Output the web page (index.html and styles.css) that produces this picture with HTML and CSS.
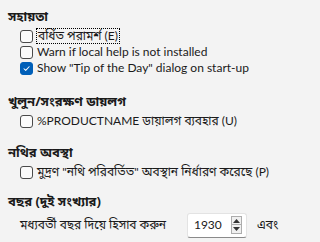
FILE: index.html
```html
<!DOCTYPE html>
<html>
<head>
<meta charset="utf-8">
<link rel="stylesheet" href="styles.css">
</head>
<body>
<div class="page">
  <section class="group g1">
    <div class="heading">সহায়তা</div>
    <div class="items">
      <label class="check"><span class="box"></span><span class="text focus">বর্ধিত পরামর্শ (E)</span></label>
      <label class="check"><span class="box"></span><span class="text">Warn if local help is not installed</span></label>
      <label class="check"><span class="box on"><svg viewBox="0 0 13 13" width="13" height="13"><path d="M3.5 6.8 L5.6 8.8 L9.6 4.4" fill="none" stroke="#fff" stroke-width="1.2" stroke-linecap="round" stroke-linejoin="round"/></svg></span><span class="text">Show "Tip of the Day" dialog on start-up</span></label>
    </div>
  </section>
  <section class="group g2">
    <div class="heading">খুলুন/সংরক্ষণ ডায়লগ</div>
    <div class="items">
      <label class="check"><span class="box"></span><span class="text">%PRODUCTNAME ডায়ালগ ব্যবহার (U)</span></label>
    </div>
  </section>
  <section class="group">
    <div class="heading">নথির অবস্থা</div>
    <div class="items">
      <label class="check"><span class="box"></span><span class="text">মুদ্রণ "নথি পরিবর্তিত" অবস্থান নির্ধারণ করেছে (P)</span></label>
    </div>
  </section>
  <section class="group">
    <div class="heading">বছর (দুই সংখ্যার)</div>
    <div class="items">
      <div class="yearrow">
        <span class="text">মধ্যবর্তী বছর দিয়ে হিসাব করুন</span>
        <div class="spin">
          <span class="value">1930</span>
          <span class="btns">
            <span class="btn"><svg viewBox="0 0 7 4" width="7" height="4"><path d="M0 4 L3.5 0 L7 4 Z" fill="#333"/></svg></span>
            <span class="btn"><svg viewBox="0 0 7 4" width="7" height="4"><path d="M0 0 L3.5 4 L7 0 Z" fill="#333"/></svg></span>
          </span>
        </div>
        <span class="text">এবং</span>
      </div>
    </div>
  </section>
</div>
</body>
</html>
```
FILE: styles.css
```css
html, body {
  margin: 0;
  padding: 0;
  background: #f3f3f3;
}
body {
  font-family: "Lato", "Noto Sans", "Noto Sans Bengali", sans-serif;
  font-size: 12px;
  color: #1a1a1a;
}
.page {
  padding: 8px 0 0 8px;
  display: flex;
  flex-direction: column;
  gap: 13px;
}
.group {
  display: flex;
  flex-direction: column;
  gap: 4px;
}
.g1 {
  margin-bottom: 4px;
}
.g2 {
  margin-bottom: 2px;
}
.heading {
  font-family: "Noto Sans", "Noto Sans Bengali", sans-serif;
  font-size: 13px;
  font-weight: bold;
  line-height: 16px;
  height: 16px;
  white-space: nowrap;
}
.items {
  padding-left: 12px;
  display: flex;
  flex-direction: column;
}
.check {
  display: flex;
  align-items: center;
  height: 16px;
  white-space: nowrap;
}
.box {
  width: 11px;
  height: 11px;
  border: 1px solid #4a4a4a;
  border-radius: 3px;
  background: #fbfbfb;
  margin-right: 4px;
  flex: none;
  display: flex;
  align-items: center;
  justify-content: center;
}
.box.on {
  background: #005fb8;
  border-color: #005fb8;
}
.box svg {
  display: block;
}
.text {
  line-height: 14px;
  white-space: nowrap;
}
.focus {
  outline: 1px dotted #000;
  outline-offset: 0;
  padding: 0 1px;
}
.yearrow {
  display: flex;
  align-items: center;
  height: 26px;
  margin-top: -1px;
}
.spin {
  margin-left: 21px;
  margin-right: 10px;
  width: 60px;
  height: 25px;
  background: #fff;
  border: 1px solid #e3e3e3;
  border-bottom-color: #8a8a8a;
  border-radius: 3px;
  display: flex;
  align-items: center;
  justify-content: space-between;
  padding-left: 6px;
  box-sizing: border-box;
}
.value {
  line-height: 14px;
}
.btns {
  display: flex;
  flex-direction: column;
  margin-right: 4px;
}
.btn {
  width: 11px;
  height: 9px;
  border: 1px solid #adadad;
  background: #f0f0f0;
  display: flex;
  align-items: center;
  justify-content: center;
  box-sizing: border-box;
}
.btn + .btn {
  border-top: none;
}
```
